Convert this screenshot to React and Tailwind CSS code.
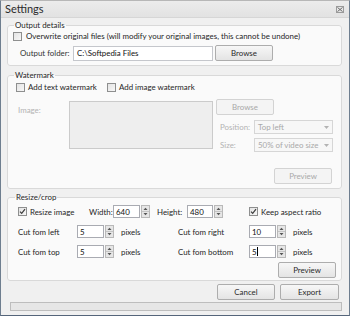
import React from "react";

const Check = ({ checked, className = "" }) => (
  <span
    className={
      "flex h-[9px] w-[9px] shrink-0 items-center justify-center border border-[#8e8f8f] bg-gradient-to-br from-[#e4e4e4] to-[#f7f7f7] " +
      className
    }
  >
    {checked && (
      <svg width="7" height="7" viewBox="0 0 7 7">
        <path d="M1 3.6 L2.7 5.4 L6 1.2" fill="none" stroke="#3c3c3c" strokeWidth="1.2" />
      </svg>
    )}
  </span>
);

const Spinner = () => (
  <span className="ml-[1px] flex h-full w-[9px] shrink-0 flex-col border border-[#b9b9b9] bg-[#e6e6e6]">
    <svg width="7" height="11" viewBox="0 0 7 11">
      <path d="M1.5 4 L3.5 1.8 L5.5 4 Z" fill="#555" />
      <line x1="0" y1="5.5" x2="7" y2="5.5" stroke="#c4c4c4" />
      <path d="M1.5 7 L3.5 9.2 L5.5 7 Z" fill="#555" />
    </svg>
  </span>
);

const Spin = ({ value, box = "w-[27px]", caret }) => (
  <div className="flex h-[13px] shrink-0">
    <div className={"flex items-center border border-[#a9abb2] bg-white pl-[2px] text-[#111] " + box}>
      {value}
      {caret && <span className="ml-[0.5px] h-[9px] w-px bg-black" />}
    </div>
    <Spinner />
  </div>
);

const Button = ({ children, disabled, className = "" }) => (
  <div
    className={
      "flex h-[16px] w-[58px] shrink-0 items-center justify-center rounded-[2px] border " +
      (disabled
        ? "border-[#d3d3d3] bg-[#f4f4f4] text-[#a9a9a9] "
        : "border-[#adadad] bg-gradient-to-b from-[#f7f7f7] to-[#e4e4e4] text-[#2a2a2a] ") +
      className
    }
  >
    {children}
  </div>
);

const Select = ({ children }) => (
  <div className="flex h-[14px] w-[79px] items-center justify-between border border-[#d6d6d6] bg-[#f7f7f7] pl-[3px] pr-[3px] text-[#a9a9a9]">
    <span>{children}</span>
    <svg width="5" height="3" viewBox="0 0 5 3">
      <path d="M0 0 L5 0 L2.5 3 Z" fill="#b3b3b3" />
    </svg>
  </div>
);

const App = () => {
  return (
    <div className="h-[317px] w-[350px] bg-white">
      <div
        className="flex h-[316px] w-[350px] flex-col whitespace-nowrap border-x border-b border-x-[#6e7e8f] border-b-[#55657a] border-t border-t-[#b7b7b7] bg-[#f0f0f0] text-[7.9px] leading-[10px] text-[#1f1f1f]"
        style={{ fontFamily: 'Lato, "Open Sans", sans-serif' }}
      >
        {/* title bar */}
        <div className="flex h-[17px] shrink-0 items-center justify-between border-b border-[#d6d6d6] bg-gradient-to-b from-[#ececec] to-[#e2e2e2] pl-[4px] pr-[5px]">
          <span className="text-[11px] text-[#2b2b2b]">Settings</span>
          <svg width="8" height="7" viewBox="0 0 8 7">
            <rect x="0.5" y="0.5" width="7" height="6" fill="none" stroke="#9a9a9a" />
            <path d="M1.5 1.5 L6.5 5.5 M6.5 1.5 L1.5 5.5" stroke="#6d6d6d" strokeWidth="1" />
          </svg>
        </div>

        <div className="flex flex-1 flex-col pl-[6px] pr-[7px]">
          {/* Output details */}
          <fieldset className="mt-[2px] flex flex-col rounded-[3px] border border-[#d9d9d9] bg-[#fafafa] pb-[4px]">
            <legend className="ml-[6px] px-[1px] leading-[10px]">Output details</legend>
            <div className="mt-[1px] flex h-[10px] items-center">
              <Check className="ml-[5px]" />
              <span className="ml-[4px]">
                Overwrite original files (will modify your original images, this cannot be undone)
              </span>
            </div>
            <div className="mt-[4px] flex h-[16px] items-center">
              <span className="ml-[12px] w-[53px] shrink-0 text-[#333]">Output folder:</span>
              <div className="flex h-[15px] w-[140px] shrink-0 items-center border border-[#c5c7cc] bg-white pl-[3px] text-[#111]">
                C:\Softpedia Files
              </div>
              <Button className="ml-[2px]">Browse</Button>
            </div>
          </fieldset>

          {/* Watermark */}
          <fieldset className="mt-[4px] flex flex-col rounded-[3px] border border-[#d9d9d9] bg-[#fafafa] pb-[4px]">
            <legend className="ml-[6px] px-[1px] leading-[10px]">Watermark</legend>
            <div className="mt-[2px] flex h-[10px] items-center">
              <Check className="ml-[8px]" />
              <span className="ml-[3px] w-[79px] shrink-0">Add text watermark</span>
              <Check />
              <span className="ml-[3px]">Add image watermark</span>
            </div>
            <div className="mt-[7px] flex">
              <span className="ml-[10px] mt-[6px] w-[51px] shrink-0 text-[#b3b3b3]">Image:</span>
              <div className="mt-[2px] h-[48px] w-[144px] shrink-0 border border-[#cbcbcb] bg-[#eeeeee]" />
              <div className="ml-[3px] flex w-[117px] flex-col">
                <Button disabled>Browse</Button>
                <div className="mt-[5px] flex items-center">
                  <span className="ml-[4px] w-[34px] shrink-0 text-[#b3b3b3]">Position:</span>
                  <Select>Top left</Select>
                </div>
                <div className="mt-[4px] flex items-center">
                  <span className="ml-[4px] w-[34px] shrink-0 text-[#b3b3b3]">Size:</span>
                  <Select>50% of video size</Select>
                </div>
                <div className="mt-[16px] flex justify-end pr-[1px]">
                  <Button disabled>Preview</Button>
                </div>
              </div>
            </div>
          </fieldset>

          {/* Resize/crop */}
          <fieldset className="mt-[3px] flex flex-col rounded-[3px] border border-[#d9d9d9] bg-[#fafafa] pb-[2px]">
            <legend className="ml-[7px] px-[1px] leading-[10px]">Resize/crop</legend>
            <div className="mt-[3px] flex h-[13px] items-center">
              <Check checked className="ml-[10px]" />
              <span className="ml-[3px] w-[59px] shrink-0">Resize image</span>
              <span className="w-[24px] shrink-0">Width:</span>
              <Spin value="640" box="w-[27px]" />
              <span className="ml-[7px] w-[30px] shrink-0">Height:</span>
              <Spin value="480" box="w-[26px]" />
              <Check checked className="ml-[26px]" />
              <span className="ml-[3px]">Keep aspect ratio</span>
            </div>
            <div className="mt-[7px] flex h-[13px] items-center">
              <span className="ml-[10px] w-[59px] shrink-0">Cut fom left</span>
              <Spin value="5" />
              <span className="ml-[7px] w-[57px] shrink-0">pixels</span>
              <span className="w-[71px] shrink-0">Cut fom right</span>
              <Spin value="10" />
              <span className="ml-[7px]">pixels</span>
            </div>
            <div className="mt-[7px] flex h-[13px] items-center">
              <span className="ml-[10px] w-[59px] shrink-0">Cut fom top</span>
              <Spin value="5" />
              <span className="ml-[7px] w-[57px] shrink-0">pixels</span>
              <span className="w-[71px] shrink-0">Cut fom bottom</span>
              <Spin value="5" caret />
              <span className="ml-[7px]">pixels</span>
            </div>
            <div className="mt-[4px] flex justify-end pr-[5px]">
              <Button>Preview</Button>
            </div>
          </fieldset>

          <div className="mt-[3px] flex justify-end gap-[5px] pr-[3px]">
            <Button>Cancel</Button>
            <Button className="w-[59px]">Export</Button>
          </div>

          <div className="ml-[3px] mt-[2px] h-[9px] border border-[#bdbdbd] bg-[#e6e6e6]" />
        </div>
      </div>
    </div>
  );
};

export default App;
